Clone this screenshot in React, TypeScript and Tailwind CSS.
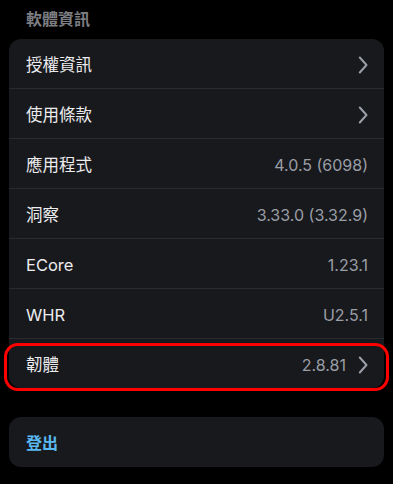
import React from 'react';

const rows: { label: string; value?: string; chevron?: boolean; highlight?: boolean }[] = [
  { label: '授權資訊', chevron: true },
  { label: '使用條款', chevron: true },
  { label: '應用程式', value: '4.0.5 (6098)' },
  { label: '洞察', value: '3.33.0 (3.32.9)' },
  { label: 'ECore', value: '1.23.1' },
  { label: 'WHR', value: 'U2.5.1' },
  { label: '韌體', value: '2.8.81', chevron: true, highlight: true },
];

function Chevron() {
  return (
    <svg width="10" height="18" viewBox="0 0 10 18" fill="none" className="ml-[12px] shrink-0">
      <path d="M1.8 1.5L8.5 9L1.8 16.5" stroke="#9a9ea6" strokeWidth="2" strokeLinecap="round" strokeLinejoin="round" />
    </svg>
  );
}

export default function App() {
  return (
    <div
      className="w-[393px] h-[484px] bg-black overflow-hidden px-[9px]"
      style={{ fontFamily: 'Inter, "Noto Sans CJK TC", sans-serif' }}
    >
      <div className="h-[39px] pl-[17px] pt-[7px] text-[16px] font-semibold text-[#7d7e83]">軟體資訊</div>
      <div className="bg-[#18191d] rounded-[12px]">
        {rows.map((row, i) => (
          <div key={row.label} className="relative">
            <div className="h-[49px] flex items-center pl-[17px] pr-[16px] pt-[3px]">
              <span className="text-[16.5px] text-[#ececee]">{row.label}</span>
              <span className="ml-auto text-[16px] text-[#9a9ea6]">{row.value}</span>
              {row.chevron && <Chevron />}
            </div>
            {i < rows.length - 1 && <div className="h-px bg-[#2a2b30]" />}
            {row.highlight && (
              <div className="absolute left-[-5px] right-[-5px] top-[4px] bottom-[-3px] border-[3px] border-[#ff0000] rounded-[14px] pointer-events-none" />
            )}
          </div>
        ))}
      </div>
      <div className="mt-[29px] bg-[#18191d] rounded-[12px] h-[50px] flex items-center pl-[17px] pt-[2px]">
        <span className="text-[16px] font-semibold text-[#5ab8f0]">登出</span>
      </div>
    </div>
  );
}
